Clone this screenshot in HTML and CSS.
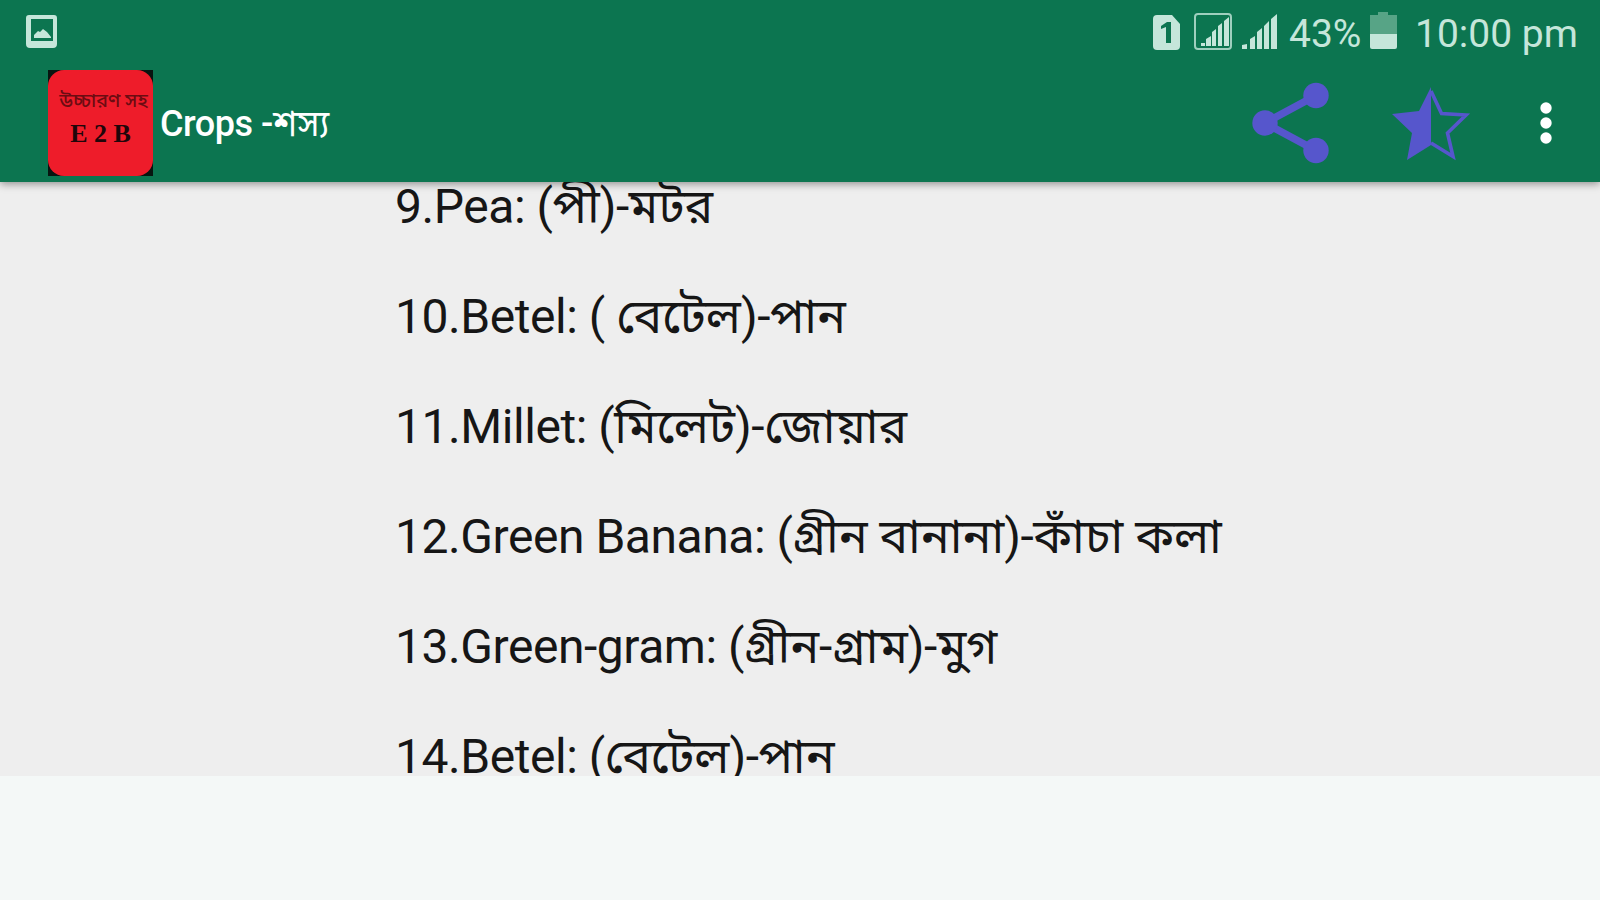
FILE: index.html
```html
<!DOCTYPE html>
<html lang="bn">
<head>
  <meta charset="UTF-8" />
  <meta name="viewport" content="width=device-width, initial-scale=1.0"/>
  <title>Crops -শস্য</title>
  <link rel="stylesheet" href="styles.css">
</head>
<body>

  <header class="header">
    <div class="status-bar">
      <svg class="icon-picture" width="31" height="33" viewBox="0 0 31 33">
        <path fill-rule="evenodd" d="M3 0h25a3 3 0 0 1 3 3v26a4 4 0 0 1-4 4H4a4 4 0 0 1-4-4V3a3 3 0 0 1 3-3zM5 4v22h22V4z"/>
        <path d="M8 23v-3l4-4 2 1 3-3 4 3 4 5v1z"/>
      </svg>

      <div class="status-right">
        <svg class="icon-sim" width="27" height="35" viewBox="0 0 27 35">
          <path d="M4 0h15l8 9v22a4 4 0 0 1-4 4H4a4 4 0 0 1-4-4V4a4 4 0 0 1 4-4z"/>
          <path class="cut" d="M8 11l6-4h4v21h-5V12l-5 2z"/>
        </svg>
        <svg class="icon-signal-box" width="38" height="37" viewBox="0 0 38 37">
          <rect class="frame" x="1" y="1" width="36" height="35" rx="3"/>
          <path d="M7 33v-3h4v3zM12 33v-7l5-3v10zM18 33V19l4-3v17zM24 33V13l4-3v23zM30 33V8l5-4v29z"/>
        </svg>
        <svg class="icon-signal" width="36" height="36" viewBox="0 0 36 36">
          <path d="M0 35v-4l5-1v5zM8 35V25l5-3v13zM15 35V18l5-4v21zM22 35V12l5-5v28zM29 35V5l6-5v35z"/>
        </svg>
        <span class="percent">43%</span>
        <svg class="icon-battery" width="27" height="38" viewBox="0 0 27 38">
          <path class="empty" d="M8 0h10v3h9v19H0V3h8z"/>
          <path d="M0 22h27v13a2 2 0 0 1-2 2H2a2 2 0 0 1-2-2z"/>
        </svg>
        <span class="clock">10:00 pm</span>
      </div>
    </div>

    <div class="toolbar">
      <div class="logo">
        <div class="logo-face">
          <span class="logo-top">উচ্চারণ সহ</span>
          <span class="logo-main">E 2 B</span>
        </div>
      </div>
      <h1 class="title">Crops -<span class="title-bn">শস্য</span></h1>

      <div class="actions">
        <svg class="icon-share" width="78" height="82" viewBox="0 0 78 82">
          <path d="M64 13.500L13 41l51 27.500"/>
          <circle cx="13" cy="41" r="12.700"/>
          <circle cx="64" cy="13.500" r="12.700"/>
          <circle cx="64" cy="68.500" r="12.700"/>
        </svg>
        <svg class="icon-star" width="80" height="75" viewBox="0 0 80 75">
          <path d="M40 0v58L16 73l5-27L1 27l27-3z"/>
          <path class="outline" d="M40 4l10.500 22.500L75 28 56.500 46 62 69.500 40 56"/>
        </svg>
        <svg class="icon-more" width="12" height="44" viewBox="0 0 12 44">
          <circle cx="6" cy="7" r="5.700"/>
          <circle cx="6" cy="22" r="5.700"/>
          <circle cx="6" cy="37" r="5.700"/>
        </svg>
      </div>
    </div>
  </header>

  <main class="content">
    <ul class="word-list">
      <li>9.Pea: (<span class="bn">পী</span>)-<span class="bn">মটর</span></li>
      <li>10.Betel: ( <span class="bn">বেটেল</span>)-<span class="bn">পান</span></li>
      <li>11.Millet: (<span class="bn">মিলেট</span>)-<span class="bn">জোয়ার</span></li>
      <li>12.Green Banana: (<span class="bn">গ্রীন বানানা</span>)-<span class="bn">কাঁচা কলা</span></li>
      <li>13.Green-gram: (<span class="bn">গ্রীন-গ্রাম</span>)-<span class="bn">মুগ</span></li>
      <li>14.Betel: (<span class="bn">বেটেল</span>)-<span class="bn">পান</span></li>
    </ul>
  </main>

</body>
</html>
```
FILE: styles.css
```css
* {
  box-sizing: border-box;
}
body {
  margin: 0;
  height: 900px;
  overflow: hidden;
  background: #f4f8f7;
  font-family: Roboto, "Noto Sans Bengali", "Noto Sans", sans-serif;
}
svg {
  display: block;
  flex: none;
}
.header {
  position: relative;
  height: 182px;
  background: #0c7550;
  box-shadow: 0 2px 8px rgba(0,0,0,0.4);
}

/* status bar */
.status-bar {
  display: flex;
  justify-content: space-between;
  height: 64px;
  padding: 0 18px 0 26px;
  color: #c5e6da;
  fill: #c5e6da;
}
.icon-picture {
  margin-top: 15px;
}
.status-right {
  display: flex;
  align-items: flex-start;
  padding-top: 13px;
}
.icon-sim {
  margin: 2px 14px 0 0;
}
.icon-sim .cut {
  fill: #0c7550;
}
.icon-signal-box {
  margin-right: 10px;
}
.icon-signal-box .frame {
  fill: none;
  stroke: #9fcfbe;
  stroke-width: 2;
}
.icon-signal {
  margin: 1px 11px 0 0;
}
.percent, .clock {
  padding-top: 1px;
  font-size: 39px;
  line-height: 40px;
  white-space: nowrap;
}
.percent {
  width: 74px;
}
.icon-battery {
  margin: -1px 18px 0 7px;
}
.icon-battery .empty {
  fill: #57a486;
}
.clock {
  width: 167px;
}

/* toolbar */
.toolbar {
  display: flex;
  align-items: center;
  height: 118px;
  padding: 0 48px;
}
.logo {
  width: 105px;
  height: 106px;
  background: #081510;
}
.logo-face {
  display: flex;
  flex-direction: column;
  align-items: center;
  height: 106px;
  padding-top: 15px;
  border-radius: 16px;
  background: #ee1c2a;
}
.logo-top {
  padding-left: 6px;
  font-size: 19.5px;
  line-height: 32px;
  font-weight: 500;
  color: #6c0c12;
  white-space: nowrap;
}
.logo-main {
  font-family: "Liberation Serif", serif;
  font-size: 26px;
  line-height: 34px;
  font-weight: bold;
  color: #20060a;
}
.title {
  margin: 2px 0 0 7px;
  font-size: 36px;
  line-height: 48px;
  font-weight: 500;
  letter-spacing: -0.5px;
  color: #fff;
  white-space: nowrap;
}
.title-bn {
  font-weight: 400;
  letter-spacing: normal;
}
.actions {
  display: flex;
  align-items: center;
  margin-left: auto;
}
.icon-share {
  margin-right: 61px;
  fill: #5656cc;
}
.icon-share path {
  fill: none;
  stroke: #5656cc;
  stroke-width: 7.5;
}
.icon-star {
  margin: 3px 69px 0 0;
  fill: #5656cc;
}
.icon-star .outline {
  fill: none;
  stroke: #5656cc;
  stroke-width: 3.6;
}
.icon-more {
  fill: #fff;
}

/* word list */
.content {
  height: 594px;
  overflow: hidden;
  background: #eee;
}
.word-list {
  margin: 0;
  padding: 0 0 0 395px;
  list-style: none;
}
.word-list li {
  height: 110px;
  font-size: 48px;
  line-height: 50px;
  letter-spacing: -0.45px;
  color: #161616;
  white-space: nowrap;
}
.word-list .bn {
  letter-spacing: normal;
}
```
